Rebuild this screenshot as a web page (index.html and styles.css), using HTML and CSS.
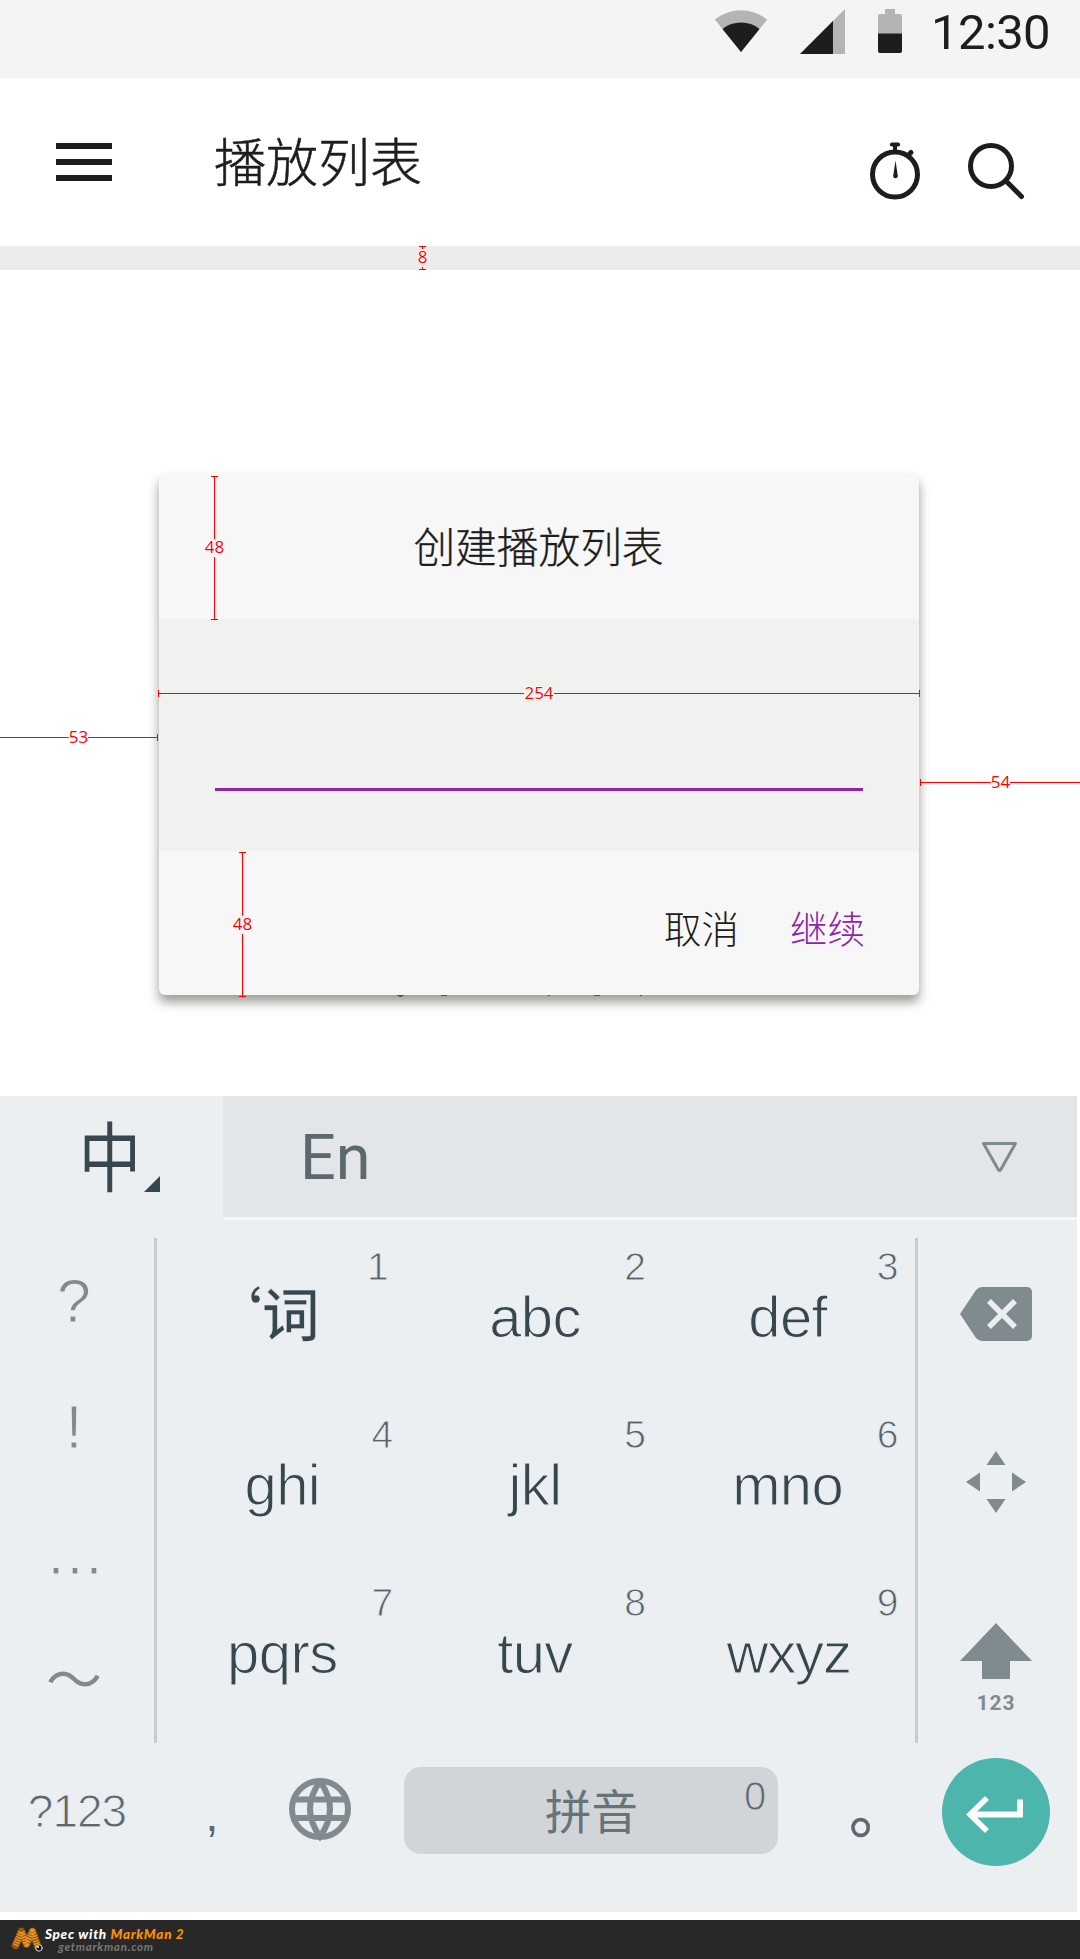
FILE: index.html
```html
<!DOCTYPE html>
<html lang="zh-CN">
<head>
<meta charset="utf-8">
<title>播放列表</title>
<link rel="stylesheet" href="styles.css">
</head>
<body>
<div class="screen">
  <div class="status">
    <svg class="wifi" width="54" height="44" viewBox="0 0 54 44"><path fill="#b4b4b2" d="M27 43 .8 10.500A42 42 0 0 1 53.200 10.500z"/><path fill="#1d1d1b" d="M27 43 8.500 20A30 30 0 0 1 45.500 20z"/></svg>
    <svg class="signal" width="45" height="45" viewBox="0 0 45 45"><path fill="#b4b4b2" d="M0 45H45V0z"/><path fill="#1d1d1b" d="M0 45H33V12z"/></svg>
    <svg class="battery" width="24" height="44" viewBox="0 0 24 44"><path fill="#b4b4b2" d="M7 0H17V5H22a2 2 0 0 1 2 2V25H0V7a2 2 0 0 1 2-2H7z"/><path fill="#1d1d1b" d="M0 24.500H24V42a2 2 0 0 1-2 2H2a2 2 0 0 1-2-2z"/></svg>
    <span class="clock">12:30</span>
  </div>
  <header class="appbar">
    <div class="menu"><i></i><i></i><i></i></div>
    <h1>播放列表</h1>
    <svg class="timer" width="52" height="58" viewBox="0 0 52 58" fill="none" stroke="#1d1d1b" stroke-width="5"><circle cx="26" cy="32.500" r="22.500"/><path d="M26 2v7" stroke-width="4"/><path d="M23 2.500h6" stroke-width="4.200" stroke-linecap="round"/><path d="M39 13.500 42 10.500" stroke-linecap="round"/><path d="M26.500 18.500 24.200 34a2.300 2.300 0 0 0 4.600 0z" fill="#1d1d1b" stroke="none"/></svg>
    <svg class="search" width="58" height="58" viewBox="0 0 58 58" fill="none" stroke="#1d1d1b" stroke-width="5"><circle cx="24" cy="24" r="20.500"/><path d="M39 39 54.500 54.500" stroke-linecap="round"/></svg>
  </header>
  <div class="strip"></div>
  <main class="content"></main>

  <section class="keyboard">
    <div class="tabs">
      <div class="tab-zh"><span>中</span><svg width="16" height="16"><path fill="#37474f" d="M0 16H16V0z"/></svg></div>
      <div class="tab-en"><span>En</span><svg width="37" height="33" viewBox="0 0 37 33" fill="none" stroke="#808b8f" stroke-width="3" stroke-linejoin="round"><path d="M2.500 2.500H34.500L19.500 29q-1 1.200-2 0z"/></svg></div>
    </div>
    <div class="pad">
      <div class="punct"><span>?</span><span>!</span><span class="dots">...</span><span class="tilde">～</span></div>
      <div class="keys">
        <div class="key"><small class="one">1</small><b class="ci">‘<em>词</em></b></div>
        <div class="key"><small>2</small><b>abc</b></div>
        <div class="key"><small>3</small><b>def</b></div>
        <div class="key"><small>4</small><b>ghi</b></div>
        <div class="key"><small>5</small><b>jkl</b></div>
        <div class="key"><small>6</small><b>mno</b></div>
        <div class="key"><small>7</small><b>pqrs</b></div>
        <div class="key"><small>8</small><b>tuv</b></div>
        <div class="key"><small>9</small><b class="wide">wxyz</b></div>
      </div>
      <div class="actions">
        <svg width="72" height="54" viewBox="0 0 72 54"><path fill="#808b8f" d="M0 27 16 3q2.500-3 6-3H67a5 5 0 0 1 5 5V49a5 5 0 0 1-5 5H22q-3.500 0-6-3z"/><path stroke="#ebeff2" stroke-width="5.500" d="M29 14 55 40M55 14 29 40"/></svg>
        <svg width="60" height="62" viewBox="0 0 60 62"><path fill="#808b8f" d="M30 0 39.500 14H20.500zM30 62 20.500 48H39.500zM0 31 14 21.500V40.500zM60 31 46 40.500V21.500z"/></svg>
        <div class="shift"><svg width="72" height="56" viewBox="0 0 72 56"><path fill="#808b8f" d="M36 0 72 38H50V56H22V38H0z"/></svg><span>123</span></div>
      </div>
    </div>
    <div class="bottom">
      <span class="sym">?123</span>
      <span class="comma">,</span>
      <svg class="globe" width="62" height="62" viewBox="0 0 62 62" fill="none" stroke="#808b8f" stroke-width="6"><circle cx="31" cy="31" r="28"/><path d="M31 3.500Q11 31 31 58.500Q51 31 31 3.500M4 21.500H58M4 40H58"/></svg>
      <div class="space"><span>拼音</span><small>0</small></div>
      <span class="stop">。</span>
      <div class="enter"><svg width="58" height="38" viewBox="0 0 58 38" fill="none" stroke="#fff"><path stroke-width="6" d="M4 18.500H54V3.500"/><path stroke-width="5.500" d="M21 2 4 18.500 21 35"/></svg></div>
    </div>
  </section>

  <footer class="credit">
    <svg width="32" height="26" viewBox="0 0 32 26" fill="none" stroke-linecap="round" stroke-linejoin="round"><path stroke="#9a530a" stroke-width="7.500" d="M3.500 18.500 9.500 4.500 14.500 17 20.500 4.500 26 20"/><path stroke="#df972f" stroke-width="6" stroke-linecap="butt" stroke-dasharray="1.500 1.100" d="M3.500 18.500 9.500 4.500 14.500 17 20.500 4.500 26 20"/><circle cx="27" cy="21" r="3.200" fill="#17130f" stroke="#ddd" stroke-width="1"/><circle cx="26" cy="20" r="1" fill="#fff"/></svg>
    <div class="credit-text"><p>Spec with <span>MarkMan 2</span></p><p class="site">getmarkman.com</p></div>
  </footer>

  <section class="dialog">
    <h2>创建播放列表</h2>
    <div class="field"><div class="input"></div></div>
    <div class="buttons"><span>取消</span><span class="primary">继续</span></div>
    <svg class="peek" width="250" height="3"><path fill="#555" d="M0 0h7v1h-2v1h-3v-1h-2zM44 0h6v1h-6zM151 0h2v1h-2zM197 0h6v1h-6zM243 0h2v1h-2z"/></svg>
  </section>

  <div class="measure v m-strip"><span>8</span></div>
  <div class="measure v m-title"><span>48</span></div>
  <div class="measure v m-buttons"><span>48</span></div>
  <div class="measure h m-width"><span>254</span></div>
  <div class="measure h m-left"><span>53</span></div>
  <div class="measure h m-right"><span>54</span></div>
</div>
</body>
</html>
```
FILE: styles.css
```css
* { box-sizing: border-box; }
body { margin: 0; background: #fff; }
h1, h2, p { margin: 0; font-weight: 300; }
svg { display: block; flex: none; overflow: visible; }

.screen {
  position: relative;
  width: 1080px;
  height: 1959px;
  overflow: hidden;
  display: flex;
  flex-direction: column;
  color: #1d1d1b;
  font-family: "Noto Sans CJK SC", sans-serif;
}

.status {
  height: 78px;
  background: #f4f4f2;
  display: flex;
  align-items: flex-start;
  padding: 9px 30px 0 714px;
}
.signal { margin-left: 32px; }
.battery { margin-left: 33px; }
.clock {
  margin-left: 29px;
  font: 400 49px/48px Roboto, sans-serif;
  letter-spacing: -0.6px;
}

.appbar {
  height: 168px;
  display: flex;
  align-items: flex-start;
  padding-left: 56px;
}
.menu { width: 56px; margin-top: 65px; display: grid; gap: 10px; }
.menu i { height: 6px; background: #1d1d1b; }
.appbar h1 {
  margin: 52px 0 0 102px;
  width: 655px;
  font-size: 52px;
  line-height: 60px;
  -webkit-text-stroke: .5px #1d1d1b;
}
.timer { margin-top: 64px; }
.search { margin: 64px 0 0 46px; }
.strip { height: 24px; background: #edecea; }
.content { height: 826px; }

.dialog {
  position: absolute;
  left: 159px;
  top: 474px;
  width: 760px;
  height: 521px;
  border-radius: 6px;
  background: #f7f7f7;
  box-shadow: 0 7px 11px rgba(30, 30, 20, .45);
}
.dialog h2 {
  height: 145px;
  padding-top: 2px;
  font-size: 41.7px;
  line-height: 139px;
  text-align: center;
  padding-right: 1px;
  -webkit-text-stroke: .3px #1d1d1b;
}
.field { height: 232px; padding: 169px 56px 0; background: #f1f1ef; }
.input { height: 3px; background: #8e24aa; }
.buttons {
  height: 144px;
  display: flex;
  justify-content: flex-end;
  gap: 51px;
  padding: 2px 54px 0 0;
  font-size: 37.500px;
  font-weight: 300;
  line-height: 147px;
}
.primary { color: #8e24aa; }
.peek { margin-left: 238px; }

.keyboard {
  width: 1077px;
  height: 816px;
  background: #ebeff2;
  font-family: "Liberation Sans", "Noto Sans CJK SC", sans-serif;
}
.tabs { height: 124px; display: flex; }
.tab-zh {
  width: 223px;
  display: flex;
  padding-left: 72px;
  color: #37474f;
}
.tab-zh span {
  width: 76px;
  font: 400 76px/115px "Noto Sans CJK SC", sans-serif;
  transform: scaleX(.82);
}
.tab-zh svg { margin: 80px 0 0 -4px; }
.tab-en {
  flex: 1;
  display: flex;
  justify-content: space-between;
  padding: 0 59px 0 77px;
  background: #e2e6e9;
  border-bottom: 3px solid #f5f7f9;
  color: #5b696f;
  font: 400 63px/123px Roboto, sans-serif;
}
.tab-en svg { margin-top: 45px; }

.pad { display: flex; height: 505px; margin-top: 18px; }
.punct {
  width: 157px;
  border-right: 3px solid #c8cccf;
  display: grid;
  grid-template-rows: repeat(4, 126px);
  padding-right: 6px;
  text-align: center;
  color: #808b8f;
  font-size: 61px;
  line-height: 127px;
  -webkit-text-stroke: 1px #ebeff2;
}
.dots { letter-spacing: 2px; padding-left: 4px; }
.tilde { font: 400 56px/120px "Noto Sans CJK SC", sans-serif; -webkit-text-stroke: 0; }
.keys {
  width: 761px;
  border-right: 3px solid #c8cccf;
  display: grid;
  grid-template-columns: repeat(3, 1fr);
  grid-template-rows: repeat(3, 168px);
}
.key { display: flex; flex-direction: column; text-align: center; }
.key small {
  padding-left: 198px;
  height: 58px;
  font-size: 39px;
  line-height: 57px;
  color: #56646a;
  -webkit-text-stroke: .9px #ebeff2;
}
.key .one { padding: 0 8px 0 197px; }
.key b {
  padding-right: 2px;
  font-size: 58px;
  font-weight: 400;
  line-height: 42px;
  color: #37474f;
  letter-spacing: -.6px;
  -webkit-text-stroke: 1.1px #ebeff2;
}
.key .wide { padding-right: 0; letter-spacing: -1.200px; }
.key .ci {
  font: 500 58px/42px "Noto Sans CJK SC", sans-serif;
  display: flex;
  justify-content: center;
  margin-top: -6px;
  padding-right: 43px;
  -webkit-text-stroke: .4px #ebeff2;
}
.ci em { font-style: normal; }

.actions {
  width: 156px;
  display: flex;
  flex-direction: column;
  align-items: center;
  padding-top: 49px;
}
.actions > svg + svg { margin-top: 110px; }
.shift {
  margin-top: 110px;
  text-align: center;
  color: #808b8f;
  font: 700 21px/24px Roboto, sans-serif;
  letter-spacing: 1px;
}
.shift span { display: block; padding-top: 12px; }

.bottom { height: 136px; display: flex; align-items: center; color: #5b696f; }
.sym {
  width: 154px;
  text-align: center;
  font-size: 46px;
  letter-spacing: -1px;
  -webkit-text-stroke: 1px #ebeff2;
}
.comma { width: 114px; padding: 8px 0 0 2px; text-align: center; font-size: 46px; }
.globe { margin: 0 0 4px 21px; }
.space {
  width: 374px;
  height: 87px;
  margin: 0 0 2px 53px;
  border-radius: 17px;
  background: #d1d5d8;
  display: flex;
}
.space span { width: 199px; margin-left: 141px; font-size: 46.500px; line-height: 84px; color: #66747a; font-family: "Noto Sans CJK SC", sans-serif; }
.space small { font-size: 40px; line-height: 58px; -webkit-text-stroke: 1px #d1d5d8; }
.stop {
  width: 164px;
  padding: 0 0 8px 71px;
  font: 400 60px/60px "Noto Sans CJK SC", sans-serif;
  -webkit-text-stroke: .5px #5b696f;
}
.enter {
  width: 108px;
  height: 108px;
  margin-top: 2px;
  border-radius: 50%;
  background: #4db6ac;
  display: flex;
  align-items: center;
  justify-content: center;
  padding: 6px 3px 0 0;
}

.credit {
  height: 39px;
  margin-top: 8px;
  display: flex;
  padding: 7px 0 0 12px;
  background: #282828;
  color: #fff;
  font: italic 700 13.500px/14px Lato, sans-serif;
  letter-spacing: .7px;
}
.credit-text { padding-left: 1px; }
.credit p { font-weight: 900; white-space: nowrap; }
.credit p span { color: #ff9100; }
.credit .site { padding-left: 13px; color: #777; font-size: 11.700px; line-height: 11px; font-weight: 700; }

.measure {
  position: absolute;
  display: flex;
  align-items: center;
  justify-content: center;
  color: #f00;
  font: 400 17px/18px "Open Sans", sans-serif;
}
.measure::before, .measure::after { content: ""; flex: 1; align-self: stretch; }
.measure span {
  margin: -1px 0 1px;
  text-shadow: 1px 0 #fff, -1px 0 #fff, 0 1px #fff, 0 -1px #fff;
}
.v { width: 7px; flex-direction: column; }
.v::before, .v::after { background: linear-gradient(#f00, #f00) center / 1px 100% no-repeat; }
.v::before { border-top: 1px solid #f00; }
.v::after { border-bottom: 1px solid #f00; }
.h { height: 7px; }
.h::before, .h::after { background: linear-gradient(#f00, #f00) center / 100% 1px no-repeat; }
.h::before { border-left: 1px solid #f00; }
.h::after { border-right: 1px solid #f00; }
.m-strip { left: 419px; top: 246px; height: 24px; }
.m-title { left: 211px; top: 476px; height: 144px; }
.m-buttons { left: 239px; top: 852px; height: 145px; }
.m-width { left: 158px; top: 690px; width: 762px; }
.m-left { left: 0; top: 734px; width: 158px; }
.m-left::before { border: 0; }
.m-right { left: 920px; top: 779px; width: 160px; }
.m-right::after { border: 0; }
```
